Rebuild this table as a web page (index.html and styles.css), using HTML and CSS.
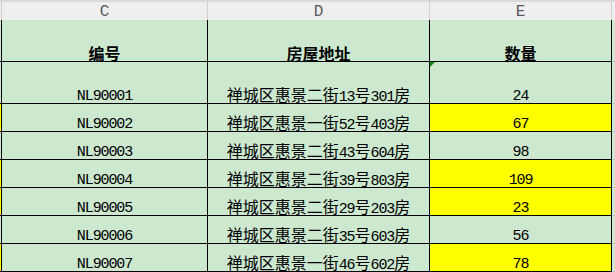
FILE: index.html
```html
<!DOCTYPE html>
<html lang="zh-CN">
<head>
<meta charset="utf-8">
<title>表格</title>
<link rel="stylesheet" href="styles.css">
</head>
<body>
<div class="sheet">
  <div class="hd"></div>
  <div class="hd">C</div>
  <div class="hd">D</div>
  <div class="hd">E</div>
  <div class="hd edge"></div>

  <div class="c b"></div>
  <div class="c th">编号</div>
  <div class="c th">房屋地址</div>
  <div class="c th">数量</div>
  <div class="c f"></div>

  <div class="c b"></div>
  <div class="c lat">NL90001</div>
  <div class="c"><span class="txt">禅城区惠景二街<span class="lat">13</span>号<span class="lat">301</span>房</span></div>
  <div class="c lat flag">24</div>
  <div class="c f"></div>

  <div class="c b y"></div>
  <div class="c lat">NL90002</div>
  <div class="c"><span class="txt">禅城区惠景一街<span class="lat">52</span>号<span class="lat">403</span>房</span></div>
  <div class="c lat y">67</div>
  <div class="c f"></div>

  <div class="c b"></div>
  <div class="c lat">NL90003</div>
  <div class="c"><span class="txt">禅城区惠景二街<span class="lat">43</span>号<span class="lat">604</span>房</span></div>
  <div class="c lat">98</div>
  <div class="c f"></div>

  <div class="c b y"></div>
  <div class="c lat">NL90004</div>
  <div class="c"><span class="txt">禅城区惠景二街<span class="lat">39</span>号<span class="lat">803</span>房</span></div>
  <div class="c lat y">109</div>
  <div class="c f"></div>

  <div class="c b y"></div>
  <div class="c lat">NL90005</div>
  <div class="c"><span class="txt">禅城区惠景二街<span class="lat">29</span>号<span class="lat">203</span>房</span></div>
  <div class="c lat y">23</div>
  <div class="c f"></div>

  <div class="c b"></div>
  <div class="c lat">NL90006</div>
  <div class="c"><span class="txt">禅城区惠景二街<span class="lat">35</span>号<span class="lat">603</span>房</span></div>
  <div class="c lat">56</div>
  <div class="c f"></div>

  <div class="c b y"></div>
  <div class="c lat">NL90007</div>
  <div class="c"><span class="txt">禅城区惠景一街<span class="lat">46</span>号<span class="lat">602</span>房</span></div>
  <div class="c lat y">78</div>
  <div class="c f"></div>
</div>
</body>
</html>
```

FILE: styles.css
```css
* { box-sizing: border-box; }
html, body { margin: 0; padding: 0; background: #cce8cf; }
body { width: 615px; height: 272px; overflow: hidden; }

.sheet {
  display: grid;
  grid-template-columns: 2px 206px 222px 182px 20px;
  grid-template-rows: 20px 42px 42px repeat(6, 28px);
  width: 632px;
}

.hd {
  background: #efefef;
  border-top: 2px solid #dadada;
  border-right: 1px solid #cfcfcf;
  display: flex;
  align-items: center;
  justify-content: center;
  font: 16px "Liberation Mono", monospace;
  color: #5a5a5a;
  padding-top: 1px;
}
.hd.edge { border-right: none; }

.c {
  position: relative;
  background: #cce8cf;
  border-right: 1px solid #000;
  border-bottom: 1px solid #000;
  display: flex;
  align-items: flex-end;
  justify-content: center;
  font: 16px/14px "Noto Sans CJK SC", sans-serif;
  color: #000;
  padding-bottom: 2px;
  white-space: nowrap;
}
.c.th { font-weight: bold; padding-bottom: 1px; }
.c.y { background: #ffff00; }
.c.f { border-right: none; border-bottom: 1px solid #b9c9ba; }

.c.lat {
  font: 15px/10px "Liberation Mono", monospace;
  letter-spacing: -1.1px;
  padding-bottom: 1px;
}
.txt .lat {
  font: 15px "Liberation Mono", monospace;
  letter-spacing: -1.1px;
  line-height: 0;
}

.flag::before {
  content: "";
  position: absolute;
  left: 0;
  top: 0;
  border-top: 5px solid #128a12;
  border-right: 5px solid transparent;
}
```
